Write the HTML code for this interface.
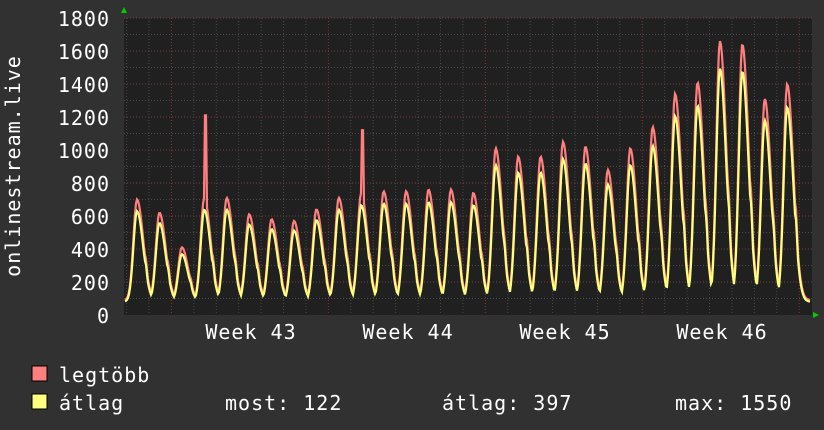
<!DOCTYPE html>
<html><head><meta charset="utf-8"><style>
html,body{margin:0;padding:0;background:#313131;width:824px;height:430px;overflow:hidden}
svg text{font-family:"DejaVu Sans Mono","Liberation Mono",monospace;fill:#fff;letter-spacing:1px}
</style></head><body>
<svg id="g" width="824" height="430" xmlns="http://www.w3.org/2000/svg">
<rect width="824" height="430" fill="#313131"/>
<rect x="124" y="18" width="688" height="297" fill="#202020"/>
<g id="grid"></g>
<path id="red" fill="none" stroke="#ff7f7f" stroke-width="2.2"/>
<path id="yel" fill="none" stroke="#ffff7f" stroke-width="2.2"/>
<polygon points="121,13 127,13 124,7" fill="#0c0"/>
<polygon points="813,312 813,318 819,315" fill="#0c0"/>
<g font-size="20" text-anchor="end">
<text x="110" y="26">1800</text><text x="110" y="59">1600</text><text x="110" y="92">1400</text>
<text x="110" y="125">1200</text><text x="110" y="158">1000</text><text x="110" y="191">800</text>
<text x="110" y="224">600</text><text x="110" y="257">400</text><text x="110" y="290">200</text>
<text x="110" y="323">0</text>
</g>
<text font-size="20" transform="translate(20,166) rotate(-90)" text-anchor="middle">onlinestream.live</text>
<g font-size="20" text-anchor="middle">
<text x="251" y="339">Week 43</text><text x="408" y="339">Week 44</text>
<text x="565" y="339">Week 45</text><text x="722" y="339">Week 46</text>
</g>
<rect x="32" y="366" width="15" height="15" fill="#ff7f7f" stroke="#000"/>
<rect x="32" y="394" width="15" height="15" fill="#ffff7f" stroke="#000"/>
<g font-size="20">
<text x="59" y="382">legtöbb</text>
<text x="59" y="410">átlag</text>
<text x="225" y="410">most: 122</text>
<text x="442" y="410">átlag: 397</text>
<text x="675" y="410">max: 1550</text>
</g>
</svg>
<script>
var Y=function(v){return 315-v*297/1800};
var g='';
for(var v=100;v<=1800;v+=100){var y=Y(v);g+='<line x1="124" x2="812" y1="'+y+'" y2="'+y+'" stroke="'+(v%200==0?'#7a3a3a':'#4a4a4a')+'" stroke-dasharray="1,2"/>';}
for(var x=126.6;x<812;x+=22.42){var maj=Math.abs(((x-171)/156.9)-Math.round((x-171)/156.9))<0.02;g+='<line y1="18" y2="315" x1="'+x+'" x2="'+x+'" stroke="'+(maj?'#7a3a3a':'#4a4a4a')+'" stroke-dasharray="1,2"/>';}
document.getElementById('grid').innerHTML=g;
var pk=[690,610,400,700,700,600,570,560,630,700,730,740,740,750,750,730,1000,950,950,1040,1010,870,1000,1130,1330,1400,1650,1630,1300,1390];
var sp={3:1200,10:1110};
function val(x,f){var best=70;for(var i=0;i<pk.length;i++){var c=137+22.42*i;var d=x-c;var w=d<0?3.6:6.2;var p=(pk[i]-80)*f;var s=Math.exp(-d*d/(2*w*w));var sh=0.5*Math.exp(-(d-8)*(d-8)/10);var v=80+p*Math.max(s,sh*0.9);if(sp[i]&&f>0.95&&Math.abs(d-1)<1.2)v=sp[i];best=Math.max(best,v);}return best;}
function path(f,off){var d='';for(var x=125;x<=810;x+=1){d+=(x==125?'M':'L')+x+','+Y(val(x,f)+off).toFixed(1);}return d;}
document.getElementById('red').setAttribute('d',path(1,10));
document.getElementById('yel').setAttribute('d',path(0.9,0));
</script>
</body></html>
